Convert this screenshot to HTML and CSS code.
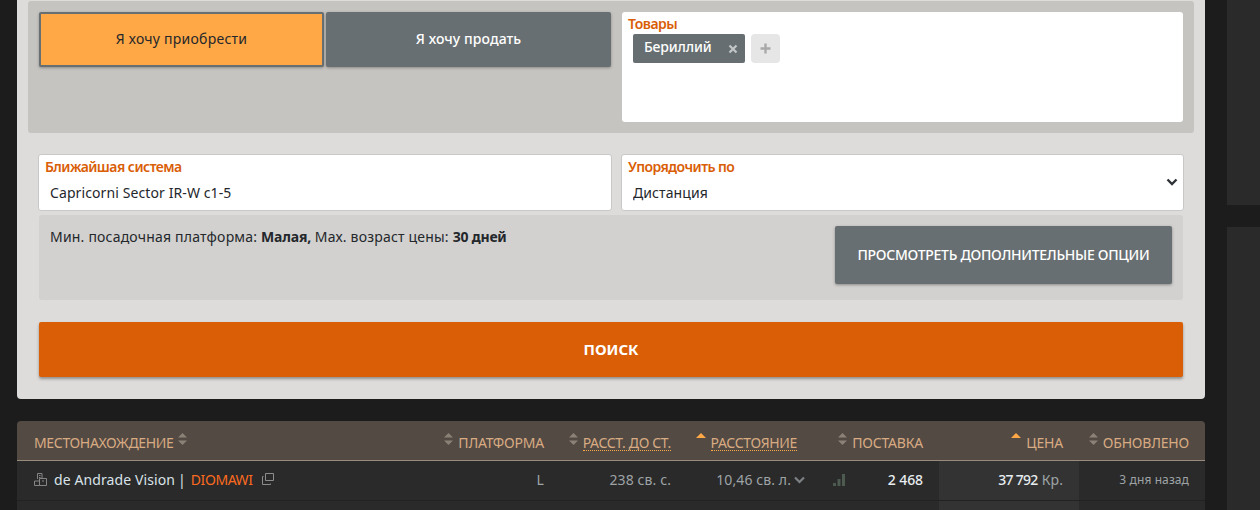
FILE: index.html
```html
<!DOCTYPE html>
<html lang="ru">
<head>
<meta charset="UTF-8">
<meta name="viewport" content="width=device-width, initial-scale=1.0">
<title>Поиск товаров</title>
<link rel="stylesheet" href="styles.css">
</head>
<body>

<main class="content">
    <form class="search-card">
        <div class="top-panel">
            <div class="mode-buttons">
                <button type="button" class="mode-btn mode-btn-active">Я хочу приобрести</button>
                <button type="button" class="mode-btn">Я хочу продать</button>
            </div>
            <div class="goods-box">
                <div class="field-label">Товары</div>
                <div class="goods-tags">
                    <span class="tag">
                        <span class="tag-name">Бериллий</span>
                        <svg class="tag-close" width="10" height="10" viewBox="0 0 10 10"><path d="M1.5 1.5l7 7M8.5 1.5l-7 7" stroke="#c3c6c7" stroke-width="2.2"/></svg>
                    </span>
                    <span class="tag-add">
                        <svg width="11" height="11" viewBox="0 0 11 11"><path d="M5.5 0.5v10M0.5 5.5h10" stroke="#a9a9a9" stroke-width="2.4"/></svg>
                    </span>
                </div>
            </div>
        </div>

        <div class="field-row">
            <label class="field field-system">
                <span class="field-label">Ближайшая система</span>
                <input class="field-input" type="text" value="Capricorni Sector IR-W c1-5">
            </label>
            <label class="field field-sort">
                <span class="field-label">Упорядочить по</span>
                <select class="field-input">
                    <option>Дистанция</option>
                </select>
                <svg class="select-arrow" width="12" height="8" viewBox="0 0 12 8"><path d="M1.5 1.5L6 6l4.5-4.5" fill="none" stroke="#2f3338" stroke-width="2.4"/></svg>
            </label>
        </div>

        <div class="options-panel">
            <p class="options-text">Мин. посадочная платформа: <b>Малая,</b> Мах. возраст цены: <b>30 дней</b></p>
            <button type="button" class="options-btn">ПРОСМОТРЕТЬ ДОПОЛНИТЕЛЬНЫЕ ОПЦИИ</button>
        </div>

        <button type="button" class="search-btn">ПОИСК</button>
    </form>

    <div class="results">
        <div class="results-row results-head">
            <div class="cell cell-left">
                <span class="head-text">МЕСТОНАХОЖДЕНИЕ</span>
                <svg class="sort-icon" width="9" height="12" viewBox="0 0 9 12"><path d="M4.500 0L9 4.500H0zM0 7.500h9L4.500 12z" fill="#8b8176"/></svg>
            </div>
            <div class="cell">
                <svg class="sort-icon" width="9" height="12" viewBox="0 0 9 12"><path d="M4.500 0L9 4.500H0zM0 7.500h9L4.500 12z" fill="#8b8176"/></svg>
                <span class="head-text">ПЛАТФОРМА</span>
            </div>
            <div class="cell">
                <svg class="sort-icon" width="9" height="12" viewBox="0 0 9 12"><path d="M4.500 0L9 4.500H0zM0 7.500h9L4.500 12z" fill="#8b8176"/></svg>
                <span class="head-text dotted">РАССТ. ДО СТ.</span>
            </div>
            <div class="cell">
                <svg class="sort-icon" width="10" height="12" viewBox="0 0 10 12"><path d="M5 0l5 5H0z" fill="#ffa845"/></svg>
                <span class="head-text dotted">РАССТОЯНИЕ</span>
            </div>
            <div class="cell">
                <svg class="sort-icon" width="9" height="12" viewBox="0 0 9 12"><path d="M4.500 0L9 4.500H0zM0 7.500h9L4.500 12z" fill="#8b8176"/></svg>
                <span class="head-text">ПОСТАВКА</span>
            </div>
            <div class="cell">
                <svg class="sort-icon" width="10" height="12" viewBox="0 0 10 12"><path d="M5 0l5 5H0z" fill="#ffa845"/></svg>
                <span class="head-text">ЦЕНА</span>
            </div>
            <div class="cell">
                <svg class="sort-icon" width="9" height="12" viewBox="0 0 9 12"><path d="M4.500 0L9 4.500H0zM0 7.500h9L4.500 12z" fill="#8b8176"/></svg>
                <span class="head-text">ОБНОВЛЕНО</span>
            </div>
        </div>

        <div class="results-row results-item">
            <div class="cell cell-left">
                <svg class="station-icon" width="13" height="13" viewBox="0 0 13 13"><path d="M3.500 6V0.500h4.500V5M0.500 12.500V8h5v4.500zM5.500 12.500V5.500h7v7zM5 2.500h1.500M5 4.500h1.500M8 8h2" fill="none" stroke="#858585"/></svg>
                <span class="station">de Andrade Vision</span>
                <span class="sep">|</span>
                <span class="system">DIOMAWI</span>
                <svg class="copy-icon" width="12" height="12" viewBox="0 0 12 12"><path d="M3.500 0.500h8v7h-8zM1.500 3.500h-1v8h8v-1" fill="none" stroke="#8d8d8d"/></svg>
            </div>
            <div class="cell cell-muted">L</div>
            <div class="cell cell-muted">238 св. с.</div>
            <div class="cell cell-muted">
                <span>10,46 св. л.</span>
                <svg class="chevron-icon" width="11" height="8" viewBox="0 0 11 8"><path d="M1 1.500l4.500 4.500L10 1.500" fill="none" stroke="#7d8184" stroke-width="2.200"/></svg>
            </div>
            <div class="cell cell-supply">
                <svg class="bars-icon" width="12" height="12" viewBox="0 0 12 12"><path d="M0 9h3v3H0zM4.500 5h3v7h-3zM9 0h3v12H9z" fill="#4d5a50"/></svg>
                <b class="cell-value">2 468</b>
            </div>
            <div class="cell cell-price"><b class="cell-value cell-value-price">37 792</b> <span class="cell-muted">Кр.</span></div>
            <div class="cell cell-date">3 дня назад</div>
        </div>

        <div class="results-row">
            <div class="cell"></div>
            <div class="cell"></div>
            <div class="cell"></div>
            <div class="cell"></div>
            <div class="cell"></div>
            <div class="cell cell-price"></div>
            <div class="cell"></div>
        </div>
    </div>
</main>

<aside class="side">
    <div class="side-block side-block-top"></div>
    <div class="side-block side-block-bottom"></div>
</aside>

</body>
</html>
```

FILE: styles.css
```css
html, body {
    margin: 0;
    padding: 0;
    height: 100%;
    overflow: hidden;
}

body {
    display: flex;
    background-color: #1c1c1c;
    font-family: "Noto Sans", Roboto, sans-serif;
    font-size: 14px;
    letter-spacing: 0.1px;
    color: #24272b;
}

.content {
    width: 1188px;
    margin-left: 17px;
    flex: none;
}

.search-card {
    background-color: #dddcda;
    border-radius: 0 0 4px 4px;
    padding: 1px 11px 22px;
    margin-bottom: 22px;
}

.top-panel {
    display: flex;
    gap: 11px;
    height: 110px;
    padding: 11px;
    background-color: #c5c4c0;
    border-radius: 3px;
}

.mode-buttons {
    display: flex;
    gap: 2px;
    height: 55px;
    flex: none;
}

.mode-btn {
    width: 285px;
    padding: 0 0 2px;
    font: inherit;
    letter-spacing: inherit;
    font-weight: 500;
    color: #fff;
    background-color: #686f72;
    border: 0;
    border-radius: 2px;
    box-shadow: 0 1px 3px rgba(0, 0, 0, 0.3);
}

.mode-btn-active {
    font-weight: 400;
    letter-spacing: 0.25px;
    color: #24272b;
    background-color: #ffa845;
    border: 2px solid #686f72;
}

.goods-box {
    flex: 1;
    background-color: #fff;
    border-radius: 3px;
}

.field-label {
    display: block;
    padding: 3px 0 0 6px;
    line-height: 17px;
    font-weight: 600;
    letter-spacing: -0.55px;
    color: #d95e06;
}

.goods-tags {
    display: flex;
    gap: 6px;
    margin: 2px 0 0 11px;
}

.tag {
    display: flex;
    align-items: center;
    justify-content: space-between;
    width: 112px;
    height: 29px;
    box-sizing: border-box;
    padding: 0 7px 0 11px;
    background-color: #666e71;
    border-radius: 2px;
    color: #fff;
    font-weight: 500;
}

.tag-name {
    margin-top: -4px;
    letter-spacing: -0.15px;
}

.tag-add {
    display: flex;
    align-items: center;
    justify-content: center;
    width: 29px;
    height: 29px;
    background-color: #e6e6e6;
    border-radius: 4px;
}

.field-row {
    display: flex;
    gap: 9px;
    margin: 21px 0 4px 10px;
}

.field {
    position: relative;
    height: 55px;
    background-color: #fff;
    border: 1px solid #c9c8c6;
    border-radius: 3px;
}

.field-system {
    width: 572px;
}

.field-sort {
    width: 561px;
}

.field-input {
    display: block;
    width: 100%;
    box-sizing: border-box;
    margin-top: 7px;
    padding: 0 0 0 11px;
    height: 20px;
    font: inherit;
    letter-spacing: inherit;
    color: #24272b;
    background: transparent;
    border: 0;
    outline: none;
    appearance: none;
}

.select-arrow {
    position: absolute;
    right: 5px;
    top: 23px;
}

.options-panel {
    display: flex;
    justify-content: space-between;
    width: 1122px;
    height: 63px;
    margin-left: 11px;
    padding: 11px;
    background-color: #d2d1cf;
    border-radius: 3px;
}

.options-text {
    margin: 2px 0 0;
    line-height: 17px;
    letter-spacing: 0.2px;
}

.options-text b {
    font-weight: 700;
    letter-spacing: -0.2px;
}

.options-btn {
    width: 337px;
    height: 58px;
    padding: 0 0 2px;
    font: inherit;
    letter-spacing: -0.28px;
    font-weight: 500;
    color: #fff;
    background-color: #686f72;
    border: 0;
    border-radius: 2px;
    box-shadow: 0 1px 3px rgba(0, 0, 0, 0.35);
}

.search-btn {
    display: block;
    width: 1144px;
    height: 55px;
    margin: 22px 0 0 11px;
    padding: 0 0 2px;
    font: inherit;
    font-size: 15px;
    font-weight: 700;
    letter-spacing: 0;
    color: #fff;
    background-color: #d95e06;
    border: 0;
    border-radius: 2px;
    box-shadow: 0 2px 3px rgba(0, 0, 0, 0.35);
}

.results-row {
    display: grid;
    grid-template-columns: 420px 123px 127px 126px 126px 140px 126px;
    height: 39px;
    background-color: #2a2a2a;
    border-bottom: 1px solid #222;
    color: #9ea3a6;
}

.results-head {
    background-color: #534a44;
    border-bottom-color: #9a8c7c;
    border-radius: 4px 4px 0 0;
    color: #d8ab82;
}

.head-text {
    margin-top: 4px;
    letter-spacing: -0.2px;
}

.head-text:first-child {
    letter-spacing: -0.35px;
}

.cell {
    display: flex;
    align-items: center;
    justify-content: flex-end;
    gap: 5px;
    padding-right: 16px;
}

.results-item .cell {
    padding-bottom: 2px;
    height: 37px;
}

.cell-left {
    justify-content: flex-start;
    padding-left: 17px;
}

.cell-price {
    background-color: #333;
    gap: 4px;
}

.results-item .cell-supply {
    justify-content: space-between;
    padding-left: 20px;
}

.cell-value {
    color: #e8edf0;
    font-weight: 500;
    letter-spacing: -0.1px;
}

.cell-value-price {
    letter-spacing: -0.7px;
}

.cell-date {
    font-size: 12px;
}

.dotted {
    border-bottom: 1px dotted #ffa845;
    line-height: 15px;
    margin-top: 5px;
}

.dotted:last-child {
    letter-spacing: -0.35px;
}

.sort-icon {
    margin-top: -3px;
}

.station {
    color: #d9e2e8;
    margin-left: 2px;
}

.sep {
    margin-left: -2px;
    color: #d9e2e8;
}

.system {
    margin-left: 0;
    letter-spacing: -0.45px;
    color: #fb6a1f;
}

.copy-icon {
    margin: -2px 0 0 5px;
}

.chevron-icon {
    margin: 0 -8px 0 -2px;
}

.side {
    flex: 1;
    margin-left: 22px;
}

.side-block {
    background-color: #2a2a2a;
}

.side-block-top {
    height: 205px;
}

.side-block-bottom {
    height: 305px;
    margin-top: 22px;
}
```
